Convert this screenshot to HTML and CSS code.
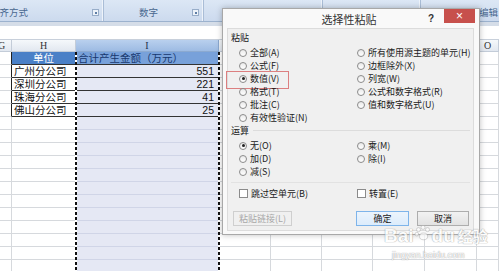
FILE: index.html
```html
<!DOCTYPE html>
<html lang="zh-CN">
<head>
    <meta charset="UTF-8">
    <title>选择性粘贴</title>
    <link rel="stylesheet" href="styles.css">
</head>
<body>

<div class="window">
    <div class="ribbon">
        <div class="group group-align"><span class="group-name">对齐方式</span><i class="launcher"></i></div>
        <div class="group group-number"><span class="group-name">数字</span><i class="launcher"></i></div>
        <div class="group group-style"></div>
        <div class="group group-cells"></div>
        <div class="group group-edit"><span class="group-name">编辑</span></div>
    </div>
    <div class="band"></div>
    <div class="formula-bar"></div>

    <div class="sheet" id="sheet">
        <div class="c h g">G</div><div class="c h">H</div><div class="c h sel">I</div><div class="c h">J</div><div class="c h">K</div><div class="c h">L</div><div class="c h">M</div><div class="c h">N</div><div class="c h">O</div>

        <div class="c edge"></div><div class="c t head-h">单位</div><div class="c t head-i">合计产生金额（万元）</div><div class="c"></div><div class="c"></div><div class="c"></div><div class="c"></div><div class="c"></div><div class="c"></div>
        <div class="c edge"></div><div class="c t">广州分公司</div><div class="c t i num">551</div><div class="c"></div><div class="c"></div><div class="c"></div><div class="c"></div><div class="c"></div><div class="c"></div>
        <div class="c edge"></div><div class="c t">深圳分公司</div><div class="c t i num">221</div><div class="c"></div><div class="c"></div><div class="c"></div><div class="c"></div><div class="c"></div><div class="c"></div>
        <div class="c edge"></div><div class="c t">珠海分公司</div><div class="c t i num">41</div><div class="c"></div><div class="c"></div><div class="c"></div><div class="c"></div><div class="c"></div><div class="c"></div>
        <div class="c edge"></div><div class="c t">佛山分公司</div><div class="c t i num">25</div><div class="c"></div><div class="c"></div><div class="c"></div><div class="c"></div><div class="c"></div><div class="c"></div>
    </div>

    <!-- copy marquee round column I -->
    <div class="marquee"></div>

    <div class="dialog">
        <div class="titlebar">
            <div class="side"></div>
            <div class="title">选择性粘贴</div>
            <div class="side controls"><span class="help">?</span><span class="close">×</span></div>
        </div>
        <div class="client">
            <div class="label">粘贴</div>
            <div class="opts paste">
                <div class="opt"><i class="radio"></i>全部(A)</div>
                <div class="opt"><i class="radio"></i>公式(F)</div>
                <div class="opt marked"><i class="radio on"></i>数值(V)</div>
                <div class="opt"><i class="radio"></i>格式(T)</div>
                <div class="opt"><i class="radio"></i>批注(C)</div>
                <div class="opt"><i class="radio"></i>有效性验证(N)</div>
                <div class="opt"><i class="radio"></i>所有使用源主题的单元(H)</div>
                <div class="opt"><i class="radio"></i>边框除外(X)</div>
                <div class="opt"><i class="radio"></i>列宽(W)</div>
                <div class="opt"><i class="radio"></i>公式和数字格式(R)</div>
                <div class="opt"><i class="radio"></i>值和数字格式(U)</div>
            </div>

            <div class="label line">运算</div>
            <div class="opts ops">
                <div class="opt"><i class="radio on"></i>无(O)</div>
                <div class="opt"><i class="radio"></i>加(D)</div>
                <div class="opt"><i class="radio"></i>减(S)</div>
                <div class="opt"><i class="radio"></i>乘(M)</div>
                <div class="opt"><i class="radio"></i>除(I)</div>
            </div>

            <div class="opts checks">
                <div class="opt"><i class="check"></i>跳过空单元(B)</div>
                <div class="opt"><i class="check"></i>转置(E)</div>
            </div>

            <div class="buttons">
                <span class="btn disabled">粘贴链接(L)</span>
                <span class="btn primary">确定</span>
                <span class="btn">取消</span>
            </div>
        </div>
    </div>

    <div class="watermark">
        <div class="wm-logo">Bai<svg width="18" height="18" viewBox="0 0 16 16"><circle cx="4" cy="5" r="1.8"/><circle cx="8" cy="3" r="1.8"/><circle cx="12" cy="5" r="1.8"/><circle cx="2.5" cy="9" r="1.6"/><ellipse cx="8.5" cy="11" rx="3.6" ry="3"/></svg>du<span class="wm-cn">经验</span></div>
        <div class="wm-url">jingyan.baidu.com</div>
    </div>
</div>

<script>
    // fill the empty rows below the table
    var sheet = document.getElementById("sheet");
    for (var r = 0; r < 12; r++) {
        for (var c = 0; c < 9; c++) {
            var cell = document.createElement("div");
            cell.className = c == 2 ? "c i" : "c";
            sheet.appendChild(cell);
        }
    }
</script>

</body>
</html>
```

FILE: styles.css
```css
* {
    box-sizing: border-box;
}
body {
    margin: 0;
    background-color: #fff;
    font-family: "Noto Sans CJK SC", sans-serif;
    overflow: hidden;
}
.window {
    position: relative;
    width: 499px;
    height: 271px;
    overflow: hidden;
}

/* Ribbon */
.ribbon {
    display: flex;
    height: 22px;
    background: linear-gradient(#dce7f5, #ccdaee);
    border-bottom: 1px solid #9cb2ce;
}
.group {
    display: flex;
    align-items: center;
    height: 100%;
    padding-top: 3px;
    border-right: 1px solid #aabdd6;
    box-shadow: inset -1px 0 0 #eef3fa;
    flex-shrink: 0;
}
.group-name {
    font-size: 9.5px;
    line-height: 12px;
    color: #49688f;
    white-space: nowrap;
}
.launcher {
    width: 7px;
    height: 7px;
    margin-left: auto;
    margin-right: 4px;
    border: 1px solid #97adc9;
    background-color: #edf2f9;
    position: relative;
}
.launcher::after {
    content: "";
    position: absolute;
    right: 1px;
    bottom: 1px;
    width: 2px;
    height: 2px;
    background-color: #5f7ea6;
}
.group-align {
    width: 114px;
    margin-left: -10px;
}
.group-number {
    width: 100px;
    padding-left: 35px;
}
.group-style {
    width: 119px;
}
.group-cells {
    width: 98px;
}
.group-edit {
    width: 90px;
    padding-left: 58px;
    border-right: none;
}
.band {
    height: 4px;
    background-color: #d5dde8;
}
.formula-bar {
    height: 14px;
    background-color: #fff;
    border-bottom: 1px solid #c8d0db;
}

/* Sheet */
.sheet {
    display: grid;
    grid-template-columns: 12px 64px 143px 52px 51px 51px 52px 52px 22px;
    grid-template-rows: 12px;
    grid-auto-rows: 13px;
}
.c {
    border-right: 1px solid #d6d9dd;
    border-bottom: 1px solid #d6d9dd;
    font-size: 10.5px;
    line-height: 12px;
    padding: 0 2px;
    white-space: nowrap;
    overflow: hidden;
    color: #111;
}
.h {
    background: linear-gradient(#f5f8fb, #e2e8f0);
    border-color: #c3ccd8;
    text-align: center;
    font-family: "Liberation Serif", serif;
    font-size: 10px;
    line-height: 11px;
    color: #333;
}
.h.sel {
    background: linear-gradient(#b9d0ee, #9dbbe3);
    border-color: #8ba9d0;
    color: #1e2f4a;
}
.h.g {
    text-align: left;
    text-indent: -4px;
}
.i {
    background-color: #e5e8f4;
    border-bottom-color: #d0d5e7;
}
.edge {
    border-right-color: #222;
}
.t {
    border-right-color: #222;
    border-bottom-color: #333;
}
.head-h {
    background-color: #4a80c7;
    color: #fff;
    text-align: center;
}
.head-i {
    background-color: #78a1da;
    color: #17386e;
}
.num {
    text-align: right;
    font-family: "Liberation Sans", sans-serif;
    padding-right: 4px;
}
.marquee {
    position: absolute;
    left: 75px;
    top: 52px;
    width: 145px;
    bottom: 0;
    background-image:
        repeating-linear-gradient(to bottom, #111 0 3px, #fff 3px 5px),
        repeating-linear-gradient(to bottom, #111 0 3px, #fff 3px 5px);
    background-size: 2px 100%, 2px 100%;
    background-position: left top, right top;
    background-repeat: no-repeat;
}

/* Dialog */
.dialog {
    position: absolute;
    left: 222px;
    top: 8px;
    width: 258px;
    height: 227px;
    display: flex;
    flex-direction: column;
    padding: 0 5px 3px 4px;
    background-color: #f9f9f9;
    border: 1px solid #a8a8a8;
    box-shadow: 0 0 6px rgba(0, 0, 0, 0.25);
}
.titlebar {
    display: flex;
    align-items: center;
    height: 19px;
    margin: 0 -5px 0 -4px;
    padding-right: 4px;
}
.side {
    flex: 1;
    display: flex;
    justify-content: flex-end;
    align-items: center;
    height: 100%;
}
.title {
    font-size: 11px;
    color: #333;
}
.help {
    font-family: "Liberation Sans", sans-serif;
    font-weight: bold;
    font-size: 10px;
    color: #333;
    margin-right: 10px;
}
.close {
    width: 31px;
    height: 14px;
    background-color: #c7504c;
    color: #fff;
    font-family: "Liberation Sans", sans-serif;
    font-size: 12px;
    line-height: 14px;
    text-align: center;
    align-self: flex-start;
}
.client {
    flex: 1;
    background-color: #f0f0f0;
    border: 1px solid #dcdcdc;
    padding: 2px 3px 0 3px;
    font-size: 9px;
    color: #1a1a1a;
}
.label {
    height: 13px;
    line-height: 13px;
    margin-bottom: 2px;
}
.label.line {
    display: flex;
    align-items: center;
    gap: 4px;
}
.label.line::after {
    content: "";
    flex: 1;
    height: 1px;
    background-color: #dcdcdc;
}
.opts {
    display: grid;
    grid-template-columns: 118px 1fr;
    grid-auto-flow: column;
    grid-auto-rows: 13px;
    padding-left: 8px;
}
.paste {
    grid-template-rows: repeat(6, 13px);
}
.ops {
    grid-template-rows: repeat(3, 13px);
    padding-bottom: 4px;
    border-bottom: 1px solid #e2e2e2;
}
.checks {
    grid-template-rows: 13px;
    margin-top: 4px;
}
.opt {
    display: flex;
    align-items: center;
    gap: 3px;
    white-space: nowrap;
    line-height: 13px;
    position: relative;
}
.radio {
    width: 8px;
    height: 8px;
    border-radius: 50%;
    border: 1px solid #8b8b8b;
    background: linear-gradient(#eaeaea, #fff);
    position: relative;
    flex-shrink: 0;
}
.radio.on::after {
    content: "";
    position: absolute;
    left: 1.5px;
    top: 1.5px;
    width: 3px;
    height: 3px;
    border-radius: 50%;
    background-color: #222;
}
.check {
    width: 9px;
    height: 9px;
    border: 1px solid #8b8b8b;
    background-color: #fff;
    flex-shrink: 0;
}
.marked::before {
    content: "";
    position: absolute;
    left: -13px;
    top: -1px;
    width: 61px;
    height: 16px;
    border: 1px solid #dc7f80;
}
.buttons {
    display: flex;
    gap: 8px;
    margin-top: 11px;
    padding-left: 2px;
    padding-right: 1px;
}
.btn {
    width: 52px;
    height: 15px;
    border: 1px solid #adadad;
    background: linear-gradient(#f2f2f2, #e2e2e2);
    text-align: center;
    line-height: 13px;
    font-size: 9px;
}
.btn.disabled {
    width: 59px;
    color: #a8a8a8;
    border-color: #cfcfcf;
    background: #f0f0f0;
}
.btn.primary {
    width: 53px;
    margin-left: auto;
    border-color: #7eb4ea;
    background: linear-gradient(#ecf4fc, #dcecfc);
}

/* Watermark */
.watermark {
    position: absolute;
    left: 384px;
    top: 226px;
    opacity: 0.7;
    color: #fff;
    text-shadow: 0 0 1px #888, 0 0 1px #888;
}
.wm-logo {
    display: flex;
    align-items: center;
    font-family: "Liberation Sans", sans-serif;
    font-weight: bold;
    font-size: 19px;
    line-height: 20px;
}
.wm-logo svg {
    fill: #fff;
    stroke: #999;
    stroke-width: 0.5;
    margin-top: -6px;
}
.wm-cn {
    font-family: "Noto Sans CJK SC", sans-serif;
    font-size: 15px;
    margin-left: 3px;
}
.wm-url {
    font-family: "Liberation Sans", sans-serif;
    font-size: 9px;
    margin-top: 4px;
    padding-left: 8px;
}
```
